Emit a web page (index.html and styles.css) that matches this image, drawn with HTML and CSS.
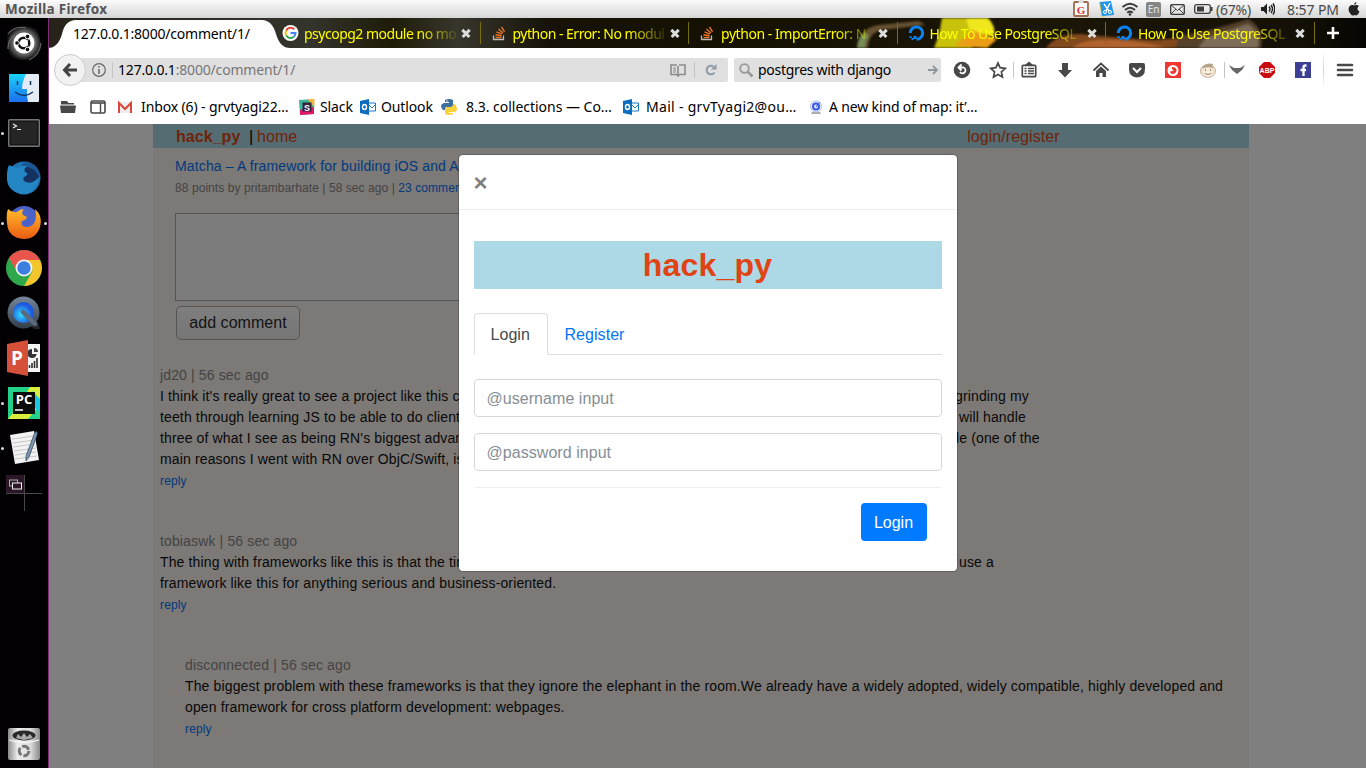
FILE: index.html
```
<!DOCTYPE html>
<html lang="en">
<head>
<meta charset="utf-8">
<title>hack_py</title>
<link rel="stylesheet" href="styles.css">
</head>
<body>
<div class="desktop">
<header class="panel">
  <span class="panel-title">Mozilla Firefox</span>
  <div class="tray">
    <svg class="t-g" width="16" height="18" viewBox="0 0 16 18"><rect x="1" y="2" width="14" height="14" rx="1" fill="#fafafa" stroke="#a06a4c" stroke-width="1.800"/><path d="M5.500 0h5v3h-5z" fill="#ddd"/><text x="8" y="13.500" text-anchor="middle" class="g-letter">G</text></svg>
    <svg class="t-cut" width="16" height="18" viewBox="0 0 16 18"><path d="M1 2 4 17 8 16V3z" fill="#e8c32c"/><path d="M2 2 13 1 16 15 4 16z" fill="#2196ea"/><path d="m6 4 5 7M12 3 8 11" stroke="#fff" stroke-width="1.400"/><circle cx="7" cy="12" r="1.500" fill="none" stroke="#fff"/><circle cx="12" cy="12" r="1.500" fill="none" stroke="#fff"/></svg>
    <svg class="t-wifi" width="18" height="16" viewBox="0 0 18 16" fill="none" stroke="#3c3c3c" stroke-width="2"><path d="M1.500 6Q9-.5 16.500 6M4 9Q9 4.500 14 9M6.300 11.700Q9 9.500 11.700 11.700"/><circle cx="9" cy="13.500" r="1.300" fill="#3c3c3c" stroke="none"/></svg>
    <span class="t-en">En</span>
    <svg class="t-mail" width="15" height="11" viewBox="0 0 15 11" fill="none" stroke="#3c3c3c"><rect x=".7" y=".7" width="13.600" height="9.600" rx="1" stroke-width="1.300"/><path d="m1 1 6.500 5.500L14 1M1 10l5-5M14 10 9 5"/></svg>
    <svg class="t-bat" width="19" height="10" viewBox="0 0 19 10"><rect x=".7" y=".7" width="15.600" height="8.600" rx="2" fill="none" stroke="#3c3c3c" stroke-width="1.300"/><path d="M3 2.500h7v5H3zM17 3h1.500v4H17z" fill="#3c3c3c"/></svg>
    <span class="t-pct">(67%)</span>
    <svg class="t-vol" width="15" height="14" viewBox="0 0 15 14"><path d="M1 5h2.500L7 1.500v11L3.500 9H1z" fill="#222"/><path d="M9 4.500q2 2.500 0 5M11 3q3 4 0 8M13 1.500q3.500 5.500 0 11" fill="none" stroke="#222" stroke-width="1.400"/></svg>
    <span class="t-clock">8:57 PM</span>
    <svg class="t-apple" width="12" height="14" viewBox="0 0 12 14" fill="#222"><path d="M6 3.500C7 3.500 9 2 11 4 8.500 6 9.500 9 11.500 9.500 10.500 12 9 14.500 6.500 13 4 14.500 2.500 12.500 1 9.500-.5 5 2.500 2 6 3.500zM6 3Q6 .5 8.500 0 8.500 2.500 6 3z"/></svg>
  </div>
</header>
<div class="workspace">
<nav class="launcher">
  <div class="app"><svg width="36" height="36" viewBox="0 0 36 36"><defs><radialGradient id="dash"><stop offset=".4" stop-color="#aaa"/><stop offset="1" stop-color="#111"/></radialGradient></defs><path d="M1 10Q14-4 30 4q3 3 5 14-2 14-14 17Q3 36 2 24z" fill="url(#dash)"/><path d="M2 9Q9 0 20 3M2 24q0-9 6-14M35 18q-1 12-12 17" fill="none" stroke="#666" stroke-width="1.200"/><circle cx="18" cy="18" r="10.500" fill="#fff"/><circle cx="18" cy="18" r="5.300" fill="none" stroke="#111" stroke-width="2.500"/><path d="m18 18 7-5M18 18l7 5M18 18h-8" stroke="#fff" stroke-width="1" opacity=".6"/><g fill="#111" stroke="#fff"><circle cx="11" cy="18" r="2.300"/><circle cx="21.500" cy="11.500" r="2.300"/><circle cx="21.500" cy="24.500" r="2.300"/></g></svg></div>
  <div class="app"><svg width="30" height="28" viewBox="0 0 30 28"><defs><linearGradient id="fin" x2="0" y2="1"><stop stop-color="#1ad2fb"/><stop offset="1" stop-color="#1b6ff0"/></linearGradient></defs><rect width="30" height="28" rx="1" fill="#e4ebf4"/><path d="M0 0h17q-4 8-4 15h5q-.5 7 1 13H0z" fill="url(#fin)"/><path d="M8.500 7v4M21.500 7v4M6 18q9 7 18 0" fill="none" stroke="#123458" stroke-width="1.500"/></svg></div>
  <div class="app"><i class="dot"></i><svg width="32" height="28" viewBox="0 0 32 28"><rect x=".7" y=".7" width="30.600" height="26.600" rx="1" fill="#161616" stroke="#737776" stroke-width="1.400"/><rect x="3" y="3" width="26" height="22" fill="#252525"/><path d="m5 5 3.500 2L5 9M9 10.500h4" fill="none" stroke="#eee" stroke-width="1.200"/></svg></div>
  <div class="app"><svg width="36" height="36" viewBox="0 0 36 36"><circle cx="18" cy="18" r="16.500" fill="#1e75b5"/><circle cx="22" cy="15" r="11" fill="#14315f"/><path d="M3 5q5 3 9 3 5-4 10-2-5 2-3 6 4 1 1 4-4 1-2 5 7 5 15-4Q30 34 16 34 0 31 1 16q0-7 2-11z" fill="#2586c6"/><path d="M15 4q7-4 13 1 6 5 6 13-5-9-10-10z" fill="#1b5797"/></svg></div>
  <div class="app"><i class="dot"></i><i class="dot dot-r"></i><svg width="36" height="36" viewBox="0 0 36 36"><defs><linearGradient id="ff" x2="0" y2="1"><stop stop-color="#ffba2a"/><stop offset="1" stop-color="#ea5b13"/></linearGradient></defs><circle cx="18" cy="17" r="16" fill="#4b63c7"/><path d="M2 4q4 4 9 3 3-3 7-3-3 3-1 6l4 2q-1 3-5 4-2 5 4 6 7 0 9-6 2-6 0-12 8 7 5 18-4 12-16 12Q2 33 1 18 0 9 2 4z" fill="url(#ff)"/></svg></div>
  <div class="app"><svg width="36" height="36" viewBox="0 0 36 36"><circle cx="18" cy="18" r="18" fill="#2fa84c"/><path d="M3 8a18 18 0 0 1 31 2H18l-7 12z" fill="#e9544d"/><path d="M34 10a18 18 0 0 1-16 26l8-14q2-7-8-12z" fill="#f2c62c"/><circle cx="18" cy="18" r="8.500" fill="#f3f3f3"/><circle cx="18" cy="18" r="6.700" fill="#3d7fe0"/></svg></div>
  <div class="app"><svg width="34" height="34" viewBox="0 0 34 34"><defs><linearGradient id="qt" x2="0" y2="1"><stop stop-color="#76879a"/><stop offset="1" stop-color="#343d49"/></linearGradient><radialGradient id="qb" cx=".4" cy=".6"><stop stop-color="#30e0ff"/><stop offset="1" stop-color="#2058dd"/></radialGradient></defs><path d="m21 22 10 4 2 7h-6l-9-7z" fill="#22272e"/><circle cx="16.500" cy="16.500" r="16" fill="url(#qt)"/><circle cx="16.500" cy="16.500" r="10.500" fill="url(#qb)"/><path d="m16 16 12 12" stroke="#5b6a7a" stroke-width="4.500" stroke-linecap="round"/></svg></div>
  <div class="app"><svg width="36" height="36" viewBox="0 0 36 36"><path d="M16 4h18v28H16z" fill="#f4f4f4"/><path d="M23.500 28v-3M26 28v-5M28.500 28v-7M31 28V18" stroke="#333" stroke-width="1.600"/><path d="M26 9a4.500 4.500 0 1 0 4.500 5H26z" fill="#333"/><path d="M28 8v4h4q0-4-4-4z" fill="#444"/><path d="M1 4 22 0v36L1 32z" fill="#d55038"/><text x="11" y="25" text-anchor="middle" class="ppt-letter">P</text></svg></div>
  <div class="app"><i class="dot"></i><svg width="32" height="32" viewBox="0 0 32 32"><path d="M0 0h32v32H0z" fill="#23d18b"/><path d="M22 0h10v18L20 32H0l8-10z" fill="#d9ee3a"/><path d="m24 4 8 8v14l-6-6z" fill="#16c8e2"/><rect x="5" y="5" width="22" height="22" fill="#0c0c0c"/><text x="16" y="17" text-anchor="middle" class="pc-letter">PC</text><path d="M7 23h8" stroke="#fff" stroke-width="1.500"/></svg></div>
  <div class="app"><i class="dot"></i><svg width="32" height="34" viewBox="0 0 32 34"><path d="M2 4 26 0l5 29-24 4z" fill="#f2f2f2"/><path d="m4 8 22-3M5 12l22-3M5 16l22-3M6 20l22-3M7 24l21-3M7 28l22-3" stroke="#bbb" stroke-width=".8"/><path d="M27 1q3-1 2 3l-8 22-3 4v-5z" fill="#7996b3" stroke="#3b4b5d" stroke-width=".8"/></svg></div>
  <div class="app"><svg width="36" height="36" viewBox="0 0 36 36"><path d="M0 0h18v18H0z" fill="#2b1727"/><path d="M18.500 0v36M0 18.500h36" stroke="#484848"/><rect x="3.500" y="5" width="8" height="6" fill="none" stroke="#aaa"/><rect x="6.500" y="8" width="9" height="6" fill="#2b1727" stroke="#eee"/></svg></div>
  <div class="app app-trash"><svg width="32" height="32" viewBox="0 0 32 32"><defs><linearGradient id="tr"><stop stop-color="#8b8b8b"/><stop offset=".3" stop-color="#ececec"/><stop offset=".7" stop-color="#ddd"/><stop offset="1" stop-color="#888"/></linearGradient></defs><rect width="32" height="32" rx="2" fill="url(#tr)"/><ellipse cx="16" cy="7.500" rx="11.500" ry="5" fill="#292929"/><path d="m8 10 2-4 3 3 3-4 3 4 3-3 3 4-9 2z" fill="#aaa"/><path d="M1 12q15 5 30 0" fill="none" stroke="#fff"/><circle cx="16" cy="23" r="4.800" fill="none" stroke="#777" stroke-width="3" stroke-dasharray="8 2.050"/></svg></div>
</nav>
<main class="browser">
  <div class="tabs">
    <svg class="theme" width="1317" height="30" viewBox="49 0 1317 30" preserveAspectRatio="none"><defs><linearGradient id="sky"><stop stop-color="#27231a"/><stop offset=".2" stop-color="#34332c"/><stop offset=".26" stop-color="#1e1b07"/><stop offset=".31" stop-color="#38362d"/><stop offset=".38" stop-color="#161207"/><stop offset=".5" stop-color="#151102"/><stop offset=".75" stop-color="#1b1607"/><stop offset=".95" stop-color="#141005"/><stop offset="1" stop-color="#060502"/></linearGradient><filter id="soft"><feGaussianBlur stdDeviation="1.200"/></filter></defs><path d="M49 0h1317v30H49z" fill="url(#sky)"/><g filter="url(#soft)"><path d="M857 30q2-20 22-23l40-4 6 4-43 5q-13 2-14 18z" fill="#665130"/><path d="M857 30q1-12 8-16l4 4q-4 4-4 12z" fill="#788d58"/><path d="M942 0h24l6 12 14 6-14 12h-38l5-13z" fill="#c9c20b"/><path d="M966 0h22q8 8 6 18l-24-4z" fill="#f0e61a"/><path d="m972 12 25 9-10 9-32-2z" fill="#ec9d13"/><path d="M1046 30q10-14 34-14 40 4 74 6l50-4v12z" fill="#82481f"/><path d="M1072 30q12-10 44-8t50 8z" fill="#b0642f"/><path d="M1180 18q34-6 68-17 17 9 13 29h-86z" fill="#54412c"/><path d="m1206 20 42-14q13 9 10 24h-60z" fill="#7c6c58"/></g></svg>
    <svg class="active-shape" width="242" height="30" viewBox="0 0 242 30"><path d="M0 30q10 0 14-14Q17 2 28 2h186q10 0 14 14 4 14 14 14z" fill="#fff"/></svg>
    <div class="tab tab-active"><span>127.0.0.1:8000/comment/1/</span></div>
    <div class="tab"><svg width="16" height="16" viewBox="0 0 16 16"><circle cx="8" cy="8" r="8" fill="#fff"/><g fill="none" stroke-width="2"><path d="M11.800 4.200A5 5 0 0 0 3.700 5.500" stroke="#ea4335"/><path d="M3.700 5.500a5 5 0 0 0 0 5" stroke="#fbbc05"/><path d="M3.700 10.500a5 5 0 0 0 7.800 1.100" stroke="#34a853"/><path d="M11.500 11.600A5 5 0 0 0 13 8H8" stroke="#4285f4"/></g></svg><span class="tab-text">psycopg2 module no mo</span><b class="x"></b></div>
    <div class="tab"><svg class="so" width="14" height="15" viewBox="0 0 14 15"><path d="M1 9.500v4h10v-4" fill="none" stroke="#bbb" stroke-width="1.300"/><path d="M3 11.500h6M3 8.800l6 .9M4 5.800l5.500 2.400M6 3l4.500 4M9 .8l3 5" stroke="#e8742a" stroke-width="1.400"/></svg><span class="tab-text">python - Error: No modul</span><b class="x"></b></div>
    <div class="tab"><svg class="so" width="14" height="15" viewBox="0 0 14 15"><path d="M1 9.500v4h10v-4" fill="none" stroke="#bbb" stroke-width="1.300"/><path d="M3 11.500h6M3 8.800l6 .9M4 5.800l5.500 2.400M6 3l4.500 4M9 .8l3 5" stroke="#e8742a" stroke-width="1.400"/></svg><span class="tab-text t-import">python - ImportError: N</span><b class="x"></b></div>
    <div class="tab"><svg width="16" height="16" viewBox="0 0 16 16"><path d="M8 14.300A6.200 6.200 0 1 0 1.800 8" fill="none" stroke="#0a84f5" stroke-width="3"/><path d="M5 11h3v3H5zM3 13h2v2H3zM1 11h2v2H1z" fill="#0a84f5"/></svg><span class="tab-text">How To Use PostgreSQL</span><b class="x"></b></div>
    <div class="tab"><svg width="16" height="16" viewBox="0 0 16 16"><path d="M8 14.300A6.200 6.200 0 1 0 1.800 8" fill="none" stroke="#0a84f5" stroke-width="3"/><path d="M5 11h3v3H5zM3 13h2v2H3zM1 11h2v2H1z" fill="#0a84f5"/></svg><span class="tab-text">How To Use PostgreSQL</span><b class="x"></b></div>
    <svg class="plus" width="14" height="14" viewBox="0 0 14 14"><path d="M7 1v12M1 7h12" stroke="#fff" stroke-width="2.600"/></svg>
  </div>
  <div class="toolbar">
    <div class="back"><svg width="16" height="14" viewBox="0 0 16 14" fill="none" stroke="#444" stroke-width="3"><path d="M8 1 2.500 7 8 13M3 7h12"/></svg></div>
    <div class="urlbar">
      <svg width="14" height="14" viewBox="0 0 14 14"><circle cx="7" cy="7" r="6.300" fill="none" stroke="#666" stroke-width="1.200"/><path d="M7 6v5M7 3v1.600" stroke="#666" stroke-width="1.500"/></svg>
      <i class="vline"></i>
      <span class="url"><b>127.0.0.1</b>:8000/comment/1/</span>
      <svg class="reader" width="16" height="13" viewBox="0 0 16 13" fill="none" stroke="#8b8b8b" stroke-width="1.600"><path d="M8 12V2M7 1H1v9.500h5.500L8 12l1.500-1.500H15V1H9"/><path d="M3 4h3M3 6h3M3 8h3" stroke-width="1"/></svg>
      <i class="vline"></i>
      <svg class="reload" width="12" height="12" viewBox="0 0 12 12"><path d="M9.500 8.500A4.300 4.300 0 1 1 8.500 2.600" fill="none" stroke="#8f9ba6" stroke-width="2"/><path d="M11.500 0v5.500H6z" fill="#8f9ba6"/></svg>
    </div>
    <div class="search">
      <svg width="15" height="15" viewBox="0 0 15 15" fill="none" stroke="#999"><circle cx="5.500" cy="5.500" r="4.300" stroke-width="1.800"/><path d="m8.500 8.500 5 5" stroke-width="2.500"/></svg>
      <span>postgres with django</span>
      <svg class="go" width="10" height="10" viewBox="0 0 10 10" fill="none" stroke="#8d979f" stroke-width="1.800"><path d="M0 5h8.500M5 1l4 4-4 4"/></svg>
    </div>
    <div class="actions">
      <svg width="18" height="18" viewBox="0 0 18 18"><circle cx="9" cy="9" r="8.300" fill="#484848"/><path d="M6 6.500h4.500a3 3 0 1 1-3.500 4.500M8.500 3.500l-3 3 3 3" fill="none" stroke="#fff" stroke-width="1.800"/></svg>
      <svg width="18" height="18" viewBox="0 0 18 18"><path d="m9 2 2.100 4.700 5.200.6-3.900 3.500 1.100 5.200L9 13.400 4.500 16l1.100-5.200-3.900-3.500 5.200-.6z" fill="none" stroke="#484848" stroke-width="1.700"/></svg>
      <i class="vline s1"></i>
      <svg class="s2" width="18" height="18" viewBox="0 0 18 18" fill="none" stroke="#484848" stroke-width="1.700"><rect x="2.300" y="4.300" width="13.400" height="11.400" rx="1"/><path d="M4.500 7.500h2M8 7.500h6M4.500 10h2M8 10h6M4.500 12.500h2M8 12.500h6" stroke-width="1.300"/><path d="M5 4h8L9 .5z" fill="#484848" stroke="none"/></svg>
      <svg width="18" height="18" viewBox="0 0 18 18"><path d="M6 2h6v7h4l-7 7.500L2 9h4z" fill="#484848"/></svg>
      <svg width="18" height="18" viewBox="0 0 18 18"><path d="m1.500 9.500 7.500-7 7.500 7" fill="none" stroke="#484848" stroke-width="1.800"/><path d="m4 10 5-4.500 5 4.500v6h-3.500v-4h-3v4H4z" fill="#484848"/></svg>
      <svg width="18" height="18" viewBox="0 0 18 18"><path d="M1 4q0-2 2-2h12q2 0 2 2v4q0 8-8 8.500Q1 16 1 8z" fill="#484848"/><path d="m5 7 4 4 4-4" fill="none" stroke="#fff" stroke-width="2"/></svg>
      <svg width="18" height="18" viewBox="0 0 18 18"><path d="M1 1h16v16H1z" fill="#f03632"/><circle cx="9" cy="9.500" r="5.500" fill="#fff"/><path d="M8 6q5 0 4.500 4-1 3-4 3-3-1-2-3 2 1 3-1-2 0-1.500-3z" fill="#f03632"/></svg>
      <svg class="s3" width="18" height="18" viewBox="0 0 18 18"><ellipse cx="9" cy="10" rx="7.500" ry="6.500" fill="#eadbc5" stroke="#cbb99f"/><path d="M3 7Q7 1 14 3l-1 3 2 1z" fill="#b5a38c"/><ellipse cx="9" cy="11" rx="5.800" ry="4.700" fill="#f8edda"/><path d="M6.500 8v2M11.500 8v2M5.500 12.500q3.500 2 7 0" fill="none" stroke="#998974"/></svg>
      <i class="vline s4"></i>
      <svg class="s5" width="18" height="18" viewBox="0 0 18 18"><path d="m1 4 5 3h6l5-3-3 5-5 4-5-4z" fill="#666"/></svg>
      <svg class="s6" width="18" height="18" viewBox="0 0 18 18"><path d="M6 1h6l5 5v6l-5 5H6l-5-5V6z" fill="#c90c10"/><text x="9" y="11.800" text-anchor="middle" class="abp">ABP</text></svg>
      <svg width="18" height="18" viewBox="0 0 18 18"><path d="M1 1h16v16H1z" fill="#3c3f93"/><path d="M12.500 4.500h-1q-2 0-2 2V15M6.500 9h5.500" fill="none" stroke="#fff" stroke-width="2.300"/></svg>
      <i class="vline tall"></i>
      <svg class="s7" width="18" height="18" viewBox="0 0 18 18"><path d="M2 4h14M2 9h14M2 14h14" stroke="#484848" stroke-width="2.600" stroke-linecap="round"/></svg>
    </div>
  </div>
  <div class="bookmarks">
    <svg width="16" height="14" viewBox="0 0 16 14" fill="#484848"><path d="M1 1h6l1.500 2H14v1.500H1zM0 5.500h16L15 13H1z"/></svg>
    <svg class="b-win" width="16" height="14" viewBox="0 0 16 14" fill="none" stroke="#484848" stroke-width="1.600"><rect x="1" y="1" width="14" height="12" rx="1.500"/><path d="M1 3h14" stroke-width="1.600"/><path d="M10.500 3v10" stroke-width="1.400"/></svg>
    <svg class="b-gm" width="16" height="14" viewBox="0 0 16 14"><path d="M1 2h14v11H1z" fill="#eee"/><path d="M2 13V3l6 6 6-6v10" fill="none" stroke="#d9483b" stroke-width="2"/></svg>
    <span class="bm w1">Inbox (6) - grvtyagi22…</span>
    <svg width="16" height="16" viewBox="0 0 16 16"><path d="M0 1 15 0v15L1 16z" fill="#41b29a"/><path d="m1 16 0-5 14-3v7z" fill="#e01765"/><path d="M8 0h7.500v8z" fill="#f2b643"/><rect x="3.500" y="3.500" width="9" height="9" fill="#33203d"/><text x="8" y="11.500" text-anchor="middle" class="slack">S</text></svg>
    <span class="bm w2">Slack</span>
    <svg width="16" height="16" viewBox="0 0 16 16"><path d="M8 4h7.500v8H8" fill="#fff" stroke="#1976c5"/><path d="m8 5 4 4 4-4" fill="none" stroke="#1976c5"/><path d="m0 2 9-2v16l-9-2z" fill="#0c6cbd"/><ellipse cx="4.500" cy="8" rx="2" ry="2.500" fill="none" stroke="#fff" stroke-width="1.400"/></svg>
    <span class="bm w3">Outlook</span>
    <svg width="16" height="16" viewBox="0 0 16 16"><path d="M4 1q4-2 8 0v5q0 2-2 2H6q-2 0-2 3H2Q0 9 0 7t3-3h5V3H4z" fill="#3b70a2"/><path d="M12 5h2q2 2 2 5t-3 3H8v1h4v1q-4 2-8 0v-5q0-2 2-2h4q2 0 2-3z" fill="#f8d13b"/><circle cx="6" cy="2" r=".7" fill="#fff"/></svg>
    <span class="bm w4">8.3. collections — Co…</span>
    <svg width="16" height="16" viewBox="0 0 16 16"><path d="M8 4h7.500v8H8" fill="#fff" stroke="#1976c5"/><path d="m8 5 4 4 4-4" fill="none" stroke="#1976c5"/><path d="m0 2 9-2v16l-9-2z" fill="#0c6cbd"/><ellipse cx="4.500" cy="8" rx="2" ry="2.500" fill="none" stroke="#fff" stroke-width="1.400"/></svg>
    <span class="bm w5">Mail - grvTyagi2@ou…</span>
    <svg width="16" height="16" viewBox="0 0 16 16"><path d="M4 13h8l1 2H3z" fill="#aaa"/><circle cx="8" cy="7.500" r="5.500" fill="#e5e8ff" stroke="#b4bdee"/><circle cx="8" cy="7.500" r="3" fill="none" stroke="#3558e8" stroke-width="2"/><path d="m8 8 4-5" stroke="#3558e8"/></svg>
    <span class="bm w6">A new kind of map: it’…</span>
  </div>
  <section class="viewport">
    <div class="site">
      <div class="site-nav"><a class="brand">hack_py</a><span class="bar">|</span><a>home</a><a class="login-link">login/register</a></div>
      <div class="story">
        <a class="story-title">Matcha – A framework for building iOS and A</a>
        <p class="story-meta">88 points by pritambarhate | 58 sec ago | <a>23 commen</a></p>
        <div class="textarea"></div>
        <button class="add">add comment</button>
      </div>
      <article class="comment c1"><h4>jd20 | 56 sec ago</h4>
        <p><span>I think it's really great to see a project like this co</span><span>grinding my</span></p>
        <p><span>teeth through learning JS to be able to do client</span><span class="r2">will handle</span></p>
        <p><span>three of what I see as being RN's biggest advan</span><span class="r3">le (one of the</span></p>
        <p><span>main reasons I went with RN over ObjC/Swift, is</span></p>
        <a>reply</a></article>
      <article class="comment"><h4>tobiaswk | 56 sec ago</h4>
        <p><span>The thing with frameworks like this is that the tim</span><span class="r2">use a</span></p>
        <p><span>framework like this for anything serious and business-oriented.</span></p>
        <a>reply</a></article>
      <article class="comment nested"><h4>disconnected | 56 sec ago</h4>
        <p><span>The biggest problem with these frameworks is that they ignore the elephant in the room.We already have a widely adopted, widely compatible, highly developed and</span></p>
        <p><span>open framework for cross platform development: webpages.</span></p>
        <a>reply</a></article>
    </div>
    <div class="backdrop">
      <div class="modal">
        <div class="modal-head"><span>×</span></div>
        <div class="modal-body">
          <h2>hack_py</h2>
          <div class="pills"><a class="on">Login</a><a>Register</a></div>
          <input class="field" placeholder="@username input">
          <input class="field" placeholder="@password input">
          <div class="modal-foot"><button class="primary">Login</button></div>
        </div>
      </div>
    </div>
  </section>
</main>
</div>
</div>
</body>
</html>
```
FILE: styles.css
```
* { box-sizing: border-box; }
body { margin: 0; width: 1366px; height: 768px; overflow: hidden; font-family: "Liberation Sans", Arial, sans-serif; }
svg { display: block; flex: none; }
.desktop { display: flex; flex-direction: column; height: 768px; }
.panel { display: flex; height: 18px; flex: none; align-items: center; justify-content: space-between; background: linear-gradient(#fbfbfb, #d6d6d6); font-family: "Noto Sans", sans-serif; color: #4a4a4a; }
.panel-title { padding-left: 5px; font-size: 13.500px; font-weight: 700; letter-spacing: .3px; color: #555; }
.tray { display: flex; align-items: center; width: 293px; font-size: 14px; }
.t-cut { margin-left: 9px; }
.t-wifi { margin-left: 7px; }
.t-en { margin-left: 7px; width: 15px; height: 15px; border-radius: 2px; background: #858585; color: #e5e5e5; font-size: 10px; line-height: 15px; text-align: center; }
.t-mail { margin-left: 9px; }
.t-bat { margin-left: 9px; }
.t-pct { margin-left: 3px; width: 38px; white-space: nowrap; letter-spacing: -.2px; }
.t-vol { margin-left: 6px; }
.t-clock { margin-left: 12px; width: 53px; white-space: nowrap; letter-spacing: -.1px; }
.t-apple { margin-left: 8px; }
.g-letter { font: bold 11px "Liberation Serif", serif; fill: #d33; }
.workspace { display: flex; flex: 1; min-height: 0; }
.launcher { display: flex; flex-direction: column; width: 49px; flex: none; padding-top: 2px; background: #030003; border-right: 1px solid #7c2f74; }
.app { position: relative; display: flex; height: 45px; flex: none; align-items: center; justify-content: center; }
.app-trash { margin-top: auto; margin-bottom: 2px; }
.dot { position: absolute; left: 1px; top: 22px; width: 3px; height: 3px; border-radius: 2px; background: #ddd; }
.dot-r { left: auto; right: 1px; }
.ppt-letter { font: bold 19px "Open Sans", sans-serif; fill: #fff; }
.pc-letter { font: bold 13px "Open Sans", sans-serif; fill: #fff; }
.browser { display: flex; flex-direction: column; flex: 1; min-width: 0; background: #fff; font-family: "Noto Sans", sans-serif; font-size: 14px; color: #000; }
.tabs { position: relative; display: flex; height: 30px; flex: none; align-items: center; }
.theme { position: absolute; left: 0; top: 0; }
.active-shape { position: absolute; left: -1px; top: 0; }
.tab { position: relative; display: flex; width: 208.500px; height: 22px; align-items: center; padding-left: 10px; border-right: 1px solid #777008; color: #ff0; flex: none; }
.tab svg { width: 17px; margin-right: 5px; }
.tab-text { width: 157px; flex: none; white-space: nowrap; letter-spacing: -.5px; -webkit-mask-image: linear-gradient(90deg, #000 115px, transparent 157px); mask-image: linear-gradient(90deg, #000 115px, transparent 157px); }
.t-import { letter-spacing: -.45px; }
.tab-active { width: 223px; padding-left: 24px; border: 0; color: #000; letter-spacing: -.2px; }
.x { position: relative; width: 10px; height: 10px; }
.x::before, .x::after { content: ""; position: absolute; left: 0; top: 4px; width: 10px; height: 2.500px; background: #ddd; transform: rotate(45deg); }
.x::after { transform: rotate(-45deg); }
.plus { position: relative; margin-left: 11px; }
.toolbar { display: flex; height: 44px; flex: none; align-items: center; padding-left: 5px; }
.back { position: relative; z-index: 1; display: flex; width: 32px; height: 32px; flex: none; align-items: center; justify-content: center; border: 1px solid #ccc; border-radius: 50%; background: #f2f2f2; }
.urlbar, .search { display: flex; height: 24px; align-items: center; background: #e0e0e0; border-radius: 2px; white-space: nowrap; }
.urlbar { width: 658px; margin-left: -16px; padding: 0 11px 0 22px; }
.vline { width: 1px; height: 16px; flex: none; background: #c4c4c4; }
.urlbar .vline { margin-left: 6px; }
.url { margin-left: 5px; color: #777; letter-spacing: -.18px; }
.url b { font-weight: 400; color: #000; }
.reader { margin-left: auto; margin-right: 2px; }
.reload { margin-left: 10px; }
.search { width: 207px; margin-left: 6px; padding: 0 3px 0 5px; }
.search span { margin-left: 4px; margin-top: -1px; letter-spacing: -.3px; }
.url { margin-top: -1px; }
.go { margin-left: auto; }
.actions { display: flex; align-items: center; margin-left: 12px; }
.actions svg + svg { margin-left: 18px; }
.actions .s1 { margin-left: 6px; }
.actions .s2 { margin-left: 6px; }
.actions svg.s3 { margin-left: 17px; }
.actions .s4 { margin-left: 7px; }
.actions .s5 { margin-left: 3px; }
.actions svg.s6 { margin-left: 12px; }
.actions .tall { margin-left: 11px; height: 38px; background: linear-gradient(#fff, #d2d2d2, #fff); }
.actions .s7 { margin-left: 12px; }
.abp { font: bold 7px "Liberation Sans", sans-serif; fill: #fff; }
.bookmarks { display: flex; height: 32px; flex: none; align-items: center; padding-left: 11px; padding-bottom: 3px; }
.b-win { margin-left: 14px; }
.b-gm { margin-left: 11px; }
.bm { flex: none; margin-left: 7px; white-space: nowrap; letter-spacing: -.12px; }
.slack { font: bold 9px "Liberation Sans", sans-serif; fill: #fff; }
.w1 { width: 158px; margin-left: 8px; }
.w2 { width: 40px; margin-left: 5px; }
.w3 { width: 60px; margin-left: 5px; }
.w4 { width: 157px; margin-left: 9px; letter-spacing: -.02px; }
.w5 { width: 162px; letter-spacing: .3px; }
.w6 { margin-left: 5px; letter-spacing: -.15px; }
.viewport { position: relative; flex: 1; min-height: 0; overflow: hidden; font-family: "Liberation Sans", Arial, sans-serif; background: #fff; }
.site { width: 1096px; height: 644px; margin-left: 104px; background: #f8f3ee; font-size: 14px; line-height: 21px; letter-spacing: .137px; color: #292b2c; }
.site-nav { display: flex; height: 24px; align-items: center; padding: 1px 0 0 23px; background: #add8e6; font-size: 16px; line-height: 23px; letter-spacing: .05px; color: #dd4814; }
.brand { width: 73px; font-weight: 700; }
.bar { width: 8px; color: #000; }
.login-link { margin-left: 670px; }
.story { display: flex; flex-direction: column; align-items: flex-start; padding: 8px 0 0 22px; }
.story a, .comment > a { color: #0275f8; }
.story-meta { margin: 1px 0 0; font-size: 12px; line-height: 21px; letter-spacing: .07px; color: #888; }
.textarea { width: 500px; height: 88px; margin-top: 14px; border: 1px solid #aaa; background: #f8f8f8; }
.add { width: 124px; height: 34px; margin: 5px 0 0 1px; padding: 0 5px; border: 1px solid #aaa; border-radius: 5px; background: linear-gradient(#fdfdfd, #ececec); font: 16px "Liberation Sans", sans-serif; letter-spacing: .05px; color: #292b2c; }
.comment { padding: 0 0 39px 7px; white-space: nowrap; }
.c1 { padding-top: 25px; }
.comment h4, .comment p { margin: 0; font-size: 14px; font-weight: 400; line-height: 21px; }
.comment h4 { color: #888; }
.comment p { display: grid; grid-template-columns: 795px 1fr; color: #111; }
.r2 { padding-left: 4px; }
.r3 { padding-left: 1px; }
.comment > a { display: block; margin-top: 1px; font-size: 12px; line-height: 21px; }
.nested { padding-left: 32px; }
.backdrop { position: absolute; inset: 0; display: flex; align-items: flex-start; justify-content: center; padding-top: 30px; background: rgba(0, 0, 0, .5); }
.modal { width: 500px; height: 418px; border: 1px solid rgba(0, 0, 0, .2); border-radius: 5px; background: #fff; background-clip: padding-box; letter-spacing: .05px; }
.modal-head { height: 55px; padding: 15px; border-bottom: 1px solid #eceeef; }
.modal-head span { display: block; font-size: 24px; font-weight: 700; line-height: 26px; color: #7f7f7f; }
.modal-body { padding: 31px 15px 0; }
.modal h2 { height: 48px; margin: 0 0 24px; background: #add8e6; color: #e04314; font-size: 32px; line-height: 48px; letter-spacing: .2px; text-align: center; }
.pills { display: flex; height: 42px; margin-bottom: 24px; border-bottom: 1px solid #ddd; font-size: 16px; line-height: 24px; }
.pills a { height: 42px; padding: 10px 17px; color: #0275f8; }
.pills .on { width: 74px; padding: 9px 16px; border: 1px solid #ddd; border-bottom-color: #fff; border-radius: 4px 4px 0 0; color: #464a4c; background: #fff; }
.field { display: block; width: 100%; height: 38px; margin-bottom: 16px; padding: 9px 12px 7px; border: 1px solid #d8d8d8; border-radius: 4px; font: 16px "Liberation Sans", sans-serif; letter-spacing: .05px; }
.field::placeholder { color: #868e96; opacity: 1; }
.modal-foot { display: flex; justify-content: flex-end; padding: 15px 15px 0; border-top: 1px solid #eceeef; }
.primary { width: 66px; height: 38px; padding: 2px 0 0; border: 0; border-radius: 4px; background: #007bff; color: #fff; font: 16px "Liberation Sans", sans-serif; }
```
